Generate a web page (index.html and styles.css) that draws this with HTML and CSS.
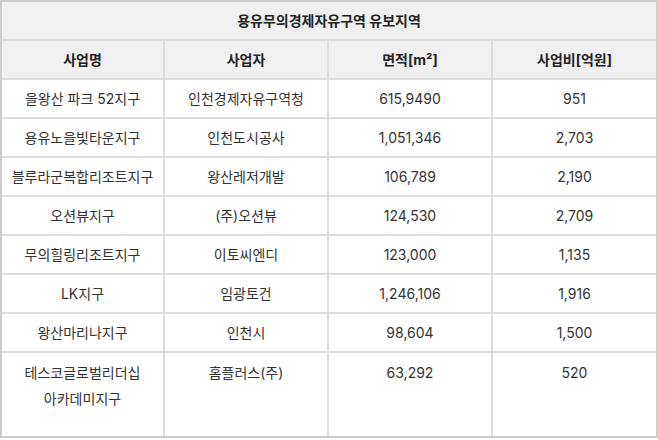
FILE: index.html
```html
<!DOCTYPE html>
<html lang="ko">
<head>
<meta charset="utf-8">
<link rel="stylesheet" href="styles.css">
</head>
<body>
<div class="frame">
<table class="zone-table">
  <colgroup>
    <col class="c1"><col class="c2"><col class="c3"><col class="c4">
  </colgroup>
  <thead>
    <tr class="title-row"><th colspan="4">용유무의경제자유구역 유보지역</th></tr>
    <tr class="head-row"><th>사업명</th><th>사업자</th><th>면적[m²]</th><th>사업비[억원]</th></tr>
  </thead>
  <tbody>
    <tr><td>을왕산 파크 52지구</td><td>인천경제자유구역청</td><td>615,9490</td><td>951</td></tr>
    <tr><td>용유노을빛타운지구</td><td>인천도시공사</td><td>1,051,346</td><td>2,703</td></tr>
    <tr><td>블루라군복합리조트지구</td><td>왕산레저개발</td><td>106,789</td><td>2,190</td></tr>
    <tr><td>오션뷰지구</td><td>(주)오션뷰</td><td>124,530</td><td>2,709</td></tr>
    <tr><td>무의힐링리조트지구</td><td>이토씨엔디</td><td>123,000</td><td>1,135</td></tr>
    <tr><td>LK지구</td><td>임광토건</td><td>1,246,106</td><td>1,916</td></tr>
    <tr><td>왕산마리나지구</td><td>인천시</td><td>98,604</td><td>1,500</td></tr>
    <tr class="tall-row"><td>테스코글로벌리더십<br>아카데미지구</td><td>홈플러스(주)</td><td>63,292</td><td>520</td></tr>
  </tbody>
</table>
</div>
</body>
</html>
```

FILE: styles.css
```css
html, body {
  margin: 0;
  padding: 0;
  background: #ffffff;
}

body {
  font-family: "Inter", "Noto Sans CJK KR", "Noto Sans", sans-serif;
  color: #333333;
}

.frame {
  width: 654px;
  border: 2px solid #cccccc;
  background: #ffffff;
}

.zone-table {
  width: 100%;
  border-collapse: collapse;
  border-style: hidden;
  table-layout: fixed;
}

.c1 { width: 162px; }
.c2 { width: 164px; }
.c3 { width: 164px; }
.c4 { width: auto; }

.zone-table th,
.zone-table td {
  border: 2px solid #dddddd;
  text-align: center;
  font-size: 14px;
  line-height: 26px;
  padding: 0;
}

.zone-table th {
  background: #f0f0f0;
  font-weight: 700;
  color: #222222;
  height: 37px;
}

.zone-table td {
  height: 37px;
  vertical-align: middle;
}

.tall-row td {
  height: 76px;
  vertical-align: top;
  padding-top: 7px;
}
```
